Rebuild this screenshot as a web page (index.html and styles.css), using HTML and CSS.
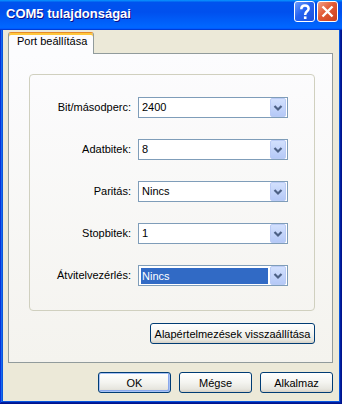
FILE: index.html
```html
<!DOCTYPE html>
<html lang="hu">
<head>
  <meta charset="UTF-8">
  <title>COM5 tulajdonságai</title>
  <link rel="stylesheet" href="styles.css">
</head>
<body>
  <div class="window">
    <div class="titlebar">
      <span class="title">COM5 tulajdonságai</span>
      <div class="caption">
        <div class="cap help">
          <svg width="19" height="19" viewBox="0 0 19 19">
            <path d="M6.3 7.2 C6.3 4.6 7.9 3.4 10 3.4 C12.3 3.4 13.6 4.8 13.6 6.7 C13.6 9.1 10.2 9.4 10.2 12.4 V13" fill="none" stroke="#fff" stroke-width="2.5"/>
            <rect x="8.9" y="14.4" width="2.6" height="2.6" fill="#fff"/>
          </svg>
        </div>
        <div class="cap close">
          <svg width="19" height="19" viewBox="0 0 19 19">
            <path d="M4.5 4.5 L14.5 14.5 M14.5 4.5 L4.5 14.5" fill="none" stroke="#fff" stroke-width="2.4"/>
          </svg>
        </div>
      </div>
    </div>

    <div class="frame">
      <div class="tabs">
        <div class="tab">Port beállítása</div>
      </div>

      <div class="page">
        <div class="group">
          <label>Bit/másodperc:</label>
          <div class="combo"><span class="value">2400</span><span class="drop"><svg width="14" height="19" viewBox="0 0 14 19"><polyline points="3.5,8 7,11.5 10.5,8" fill="none" stroke="#4d6185" stroke-width="2.2"/></svg></span></div>

          <label>Adatbitek:</label>
          <div class="combo"><span class="value">8</span><span class="drop"><svg width="14" height="19" viewBox="0 0 14 19"><polyline points="3.5,8 7,11.5 10.5,8" fill="none" stroke="#4d6185" stroke-width="2.2"/></svg></span></div>

          <label>Paritás:</label>
          <div class="combo"><span class="value">Nincs</span><span class="drop"><svg width="14" height="19" viewBox="0 0 14 19"><polyline points="3.5,8 7,11.5 10.5,8" fill="none" stroke="#4d6185" stroke-width="2.2"/></svg></span></div>

          <label>Stopbitek:</label>
          <div class="combo"><span class="value">1</span><span class="drop"><svg width="14" height="19" viewBox="0 0 14 19"><polyline points="3.5,8 7,11.5 10.5,8" fill="none" stroke="#4d6185" stroke-width="2.2"/></svg></span></div>

          <label>Átvitelvezérlés:</label>
          <div class="combo"><span class="value selected">Nincs</span><span class="drop"><svg width="14" height="19" viewBox="0 0 14 19"><polyline points="3.5,8 7,11.5 10.5,8" fill="none" stroke="#4d6185" stroke-width="2.2"/></svg></span></div>
        </div>

        <div class="reset-row">
          <button class="btn reset">Alapértelmezések visszaállítása</button>
        </div>
      </div>

      <div class="actions">
        <button class="btn default">OK</button>
        <button class="btn">Mégse</button>
        <button class="btn">Alkalmaz</button>
      </div>
    </div>
  </div>
</body>
</html>
```

FILE: styles.css
```css
html, body {
  margin: 0;
  padding: 0;
}
body {
  width: 342px;
  height: 404px;
  overflow: hidden;
  font-family: "Liberation Sans", Arial, sans-serif;
  font-size: 11px;
  color: #000;
}
.window {
  height: 404px;
  box-sizing: border-box;
  display: flex;
  flex-direction: column;
  padding: 0 3px 3px;
  background: #0855dd;
  box-shadow: inset -1px -1px #00138c, inset 1px 1px #0831d9, inset -2px -2px #001ea0, inset 2px 2px #166aee;
}
.titlebar {
  height: 30px;
  flex: none;
  margin: 0 -3px;
  padding: 0 4px 0 6px;
  display: flex;
  justify-content: space-between;
  align-items: flex-start;
  background: linear-gradient(180deg, #0997ff, #0053ee 8%, #0050ee 40%, #0066ff 88%, #0066ff 93%, #005bff 95%, #003dd7 96%, #003dd7);
}
.title {
  color: #fff;
  font-weight: bold;
  font-size: 13px;
  line-height: 15px;
  padding-top: 6px;
  text-shadow: 1px 1px #0f1089;
}
.caption {
  display: flex;
  gap: 2px;
  margin-top: 1px;
}
.cap {
  width: 21px;
  height: 21px;
  box-sizing: border-box;
  border: 1px solid #fff;
  border-radius: 3px;
  display: flex;
  align-items: center;
  justify-content: center;
}
.help {
  background: linear-gradient(135deg, #6d9dfc, #2663f1 45%, #1d4fdc);
}
.close {
  background: linear-gradient(135deg, #f0a088, #e25a35 45%, #c9401f);
}
.frame {
  flex: 1;
  background: #ece9d8;
  display: flex;
  flex-direction: column;
  padding: 2px 6px 8px 5px;
}
.tabs {
  display: flex;
  position: relative;
  z-index: 1;
  margin-bottom: -1px;
}
.tab {
  height: 22px;
  box-sizing: border-box;
  padding: 2px 6px 0 8px;
  line-height: 13px;
  background: #fcfcfe;
  border: 1px solid #919b9c;
  border-top-color: #e68b2c;
  border-bottom: 0;
  border-radius: 3px 3px 0 0;
  box-shadow: inset 0 2px #ffc73c;
}
.page {
  border: 1px solid #919b9c;
  background: linear-gradient(#fcfcfe, #f4f3ee);
  padding: 20px 17px 18px 20px;
}
.group {
  border: 1px solid #d0d0bf;
  border-radius: 4px;
  display: grid;
  grid-template-columns: 101px 150px;
  grid-auto-rows: 21px;
  column-gap: 7px;
  row-gap: 21px;
  align-items: center;
  padding: 22px 0 24px;
}
.group label {
  text-align: right;
  line-height: 13px;
}
.combo {
  height: 21px;
  box-sizing: border-box;
  border: 1px solid #7f9db9;
  background: #fff;
  display: flex;
}
.value {
  flex: 1;
  padding-left: 3px;
  line-height: 19px;
}
.value.selected {
  margin: 2px 2px 1px;
  padding-left: 1px;
  line-height: 16px;
  background: #316ac5;
  color: #fff;
}
.drop {
  width: 16px;
  margin-right: 1px;
  box-sizing: border-box;
  border: 1px solid #bacbf5;
  border-radius: 2px;
  background: linear-gradient(#d2e0fd, #b5c9f7);
  display: flex;
  align-items: center;
  justify-content: center;
}
.reset-row {
  display: flex;
  justify-content: flex-end;
  margin-top: 12px;
}
.btn {
  height: 21px;
  box-sizing: border-box;
  padding: 0;
  font-family: inherit;
  font-size: 11px;
  color: #000;
  border: 1px solid #003c74;
  border-radius: 3px;
  background: linear-gradient(#ffffff, #f4f4f0 50%, #e6e5de 85%, #d6d0c5);
}
.reset {
  width: 165px;
}
.actions {
  display: flex;
  justify-content: flex-end;
  gap: 8px;
  margin-top: 9px;
}
.actions .btn {
  width: 73px;
}
.btn.default {
  box-shadow: inset 0 0 0 1px #a8c2f5, inset -1px -1px 0 1px #8aa8ec;
}
```
